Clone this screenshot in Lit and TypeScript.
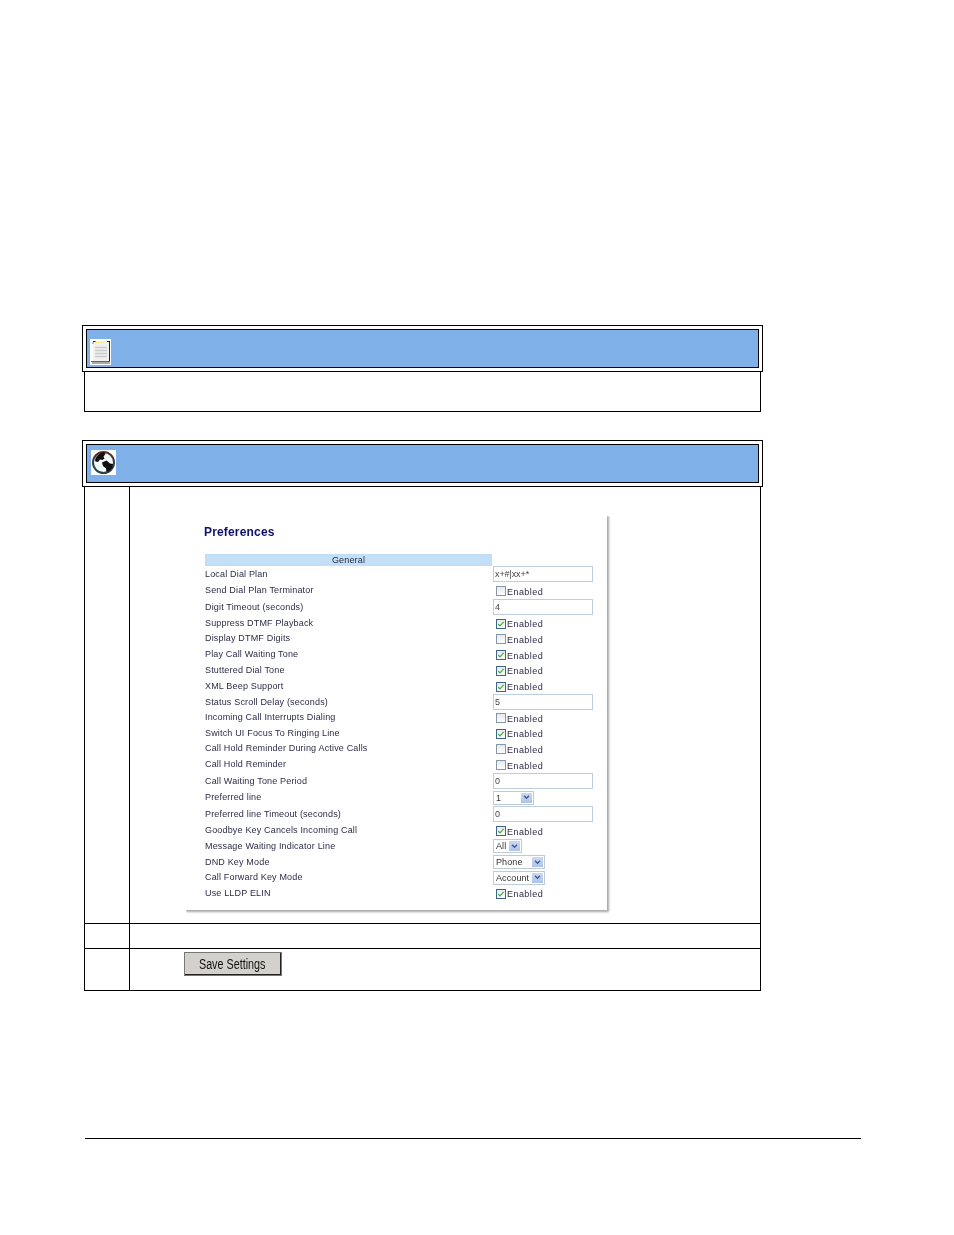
import { LitElement, html, css, svg } from "lit";
import { customElement } from "lit/decorators.js";

type Ctl =
  | { k: "text"; v: string; c?: boolean }
  | { k: "check"; on: boolean }
  | { k: "select"; v: string; w: number };

const rows: [string, number, Ctl][] = [
  ["Local Dial Plan", 16, { k: "text", v: "x+#|xx+*" }],
  ["Send Dial Plan Terminator", 16.5, { k: "check", on: false }],
  ["Digit Timeout (seconds)", 16, { k: "text", v: "4" }],
  ["Suppress DTMF Playback", 16, { k: "check", on: true }],
  ["Display DTMF Digits", 15.5, { k: "check", on: false }],
  ["Play Call Waiting Tone", 16, { k: "check", on: true }],
  ["Stuttered Dial Tone", 15.5, { k: "check", on: true }],
  ["XML Beep Support", 16.5, { k: "check", on: true }],
  ["Status Scroll Delay (seconds)", 15.5, { k: "text", v: "5" }],
  ["Incoming Call Interrupts Dialing", 15.5, { k: "check", on: false }],
  ["Switch UI Focus To Ringing Line", 15, { k: "check", on: true }],
  ["Call Hold Reminder During Active Calls", 16, { k: "check", on: false }],
  ["Call Hold Reminder", 16.5, { k: "check", on: false }],
  ["Call Waiting Tone Period", 16.5, { k: "text", v: "0" }],
  ["Preferred line", 16.5, { k: "select", v: "1", w: 41 }],
  ["Preferred line Timeout (seconds)", 16.5, { k: "text", v: "0" }],
  ["Goodbye Key Cancels Incoming Call", 16, { k: "check", on: true }],
  ["Message Waiting Indicator Line", 15.5, { k: "select", v: "All", w: 29 }],
  ["DND Key Mode", 16, { k: "select", v: "Phone", w: 52 }],
  ["Call Forward Key Mode", 15, { k: "select", v: "Account", w: 52 }],
  ["Use LLDP ELIN", 16, { k: "check", on: true }],
];

const noteIcon = svg`<svg viewBox="0 0 21 26" width="21" height="26">
  <rect width="21" height="26" fill="#fff"/>
  <rect x="3" y="2" width="17" height="21" fill="#f1f1f1"/>
  <path d="M19.500 2.500v20" stroke="#222" stroke-width="1" fill="none"/>
  <path d="M3 2.500h2.500M17 2.500h3" stroke="#222" stroke-width="1"/>
  <path d="M3 3.500v1" stroke="#222" stroke-width="1"/>
  <path d="M5.500 3.500h11" stroke="#ece874" stroke-width="1" stroke-dasharray="1.500 1"/>
  <path d="M5 8.500h12M5 11.500h12M5 14.500h12M5 17.500h12" stroke="#c9cacb" stroke-width="1.300"/>
  <path d="M1 22.500h19" stroke="#666" stroke-width="1"/>
  <rect x="2" y="23" width="18" height="2" fill="#aaacac"/>
</svg>`;

const globeIcon = svg`<svg viewBox="0 0 25 25" width="25" height="25">
  <defs><linearGradient id="ring" x1="0" y1="0" x2="0" y2="1"><stop offset="0" stop-color="#5c2c2c"/><stop offset="1" stop-color="#244848"/></linearGradient></defs>
  <rect width="25" height="25" fill="#fff"/>
  <circle cx="12.500" cy="12.500" r="10.500" fill="#f0fbfb" stroke="url(#ring)" stroke-width="2"/>
  <path d="M4 10c1-4 4-7 9-8l1.500 2-2 2.500 1 2-2 1.500-2.500-.5-2 2.500-2.500-.5z" fill="#16110f"/>
  <path d="M11 12.500l4.500-2 3.500 3 3 .5-.5 3.500-3.500 3.500-2.500 1-.5-3.500-3-2.500z" fill="#100e0e"/>
</svg>`;

const check = svg`<svg viewBox="0 0 10 10" width="8" height="8"><path d="M1.500 5l2.300 2.300 4.500-5" fill="none" stroke="#3cb043" stroke-width="1.500"/></svg>`;

@customElement("app-root")
export class AppRoot extends LitElement {
  static styles = css`
    :host { display: block; width: 954px; height: 1235px; background: #fff; font-family: "Liberation Sans", Arial, sans-serif; }
    .page { display: flex; flex-direction: column; padding: 325px 0 0 82px; box-sizing: border-box; height: 1235px; }
    .banner { box-sizing: border-box; width: 681px; height: 47px; border: 1px solid #000; padding: 3px; }
    .banner-in { box-sizing: border-box; height: 100%; background: #7fb0e8; border: 1px solid #000; display: flex; align-items: flex-start; padding: 9px 0 0 3px; }
    .banner-in.g { padding: 5px 0 0 4px; }
    .banner svg { display: block; }
    .note-body { box-sizing: border-box; margin-left: 2px; width: 677px; height: 40px; border: 1px solid #000; border-top: 0; }
    .gap { height: 28px; }
    .tbl { margin-left: 2px; width: 677px; box-sizing: border-box; border: 1px solid #000; border-top: 0; display: grid; grid-template-columns: 45px 1fr; grid-template-rows: 437px 25px 41px; }
    .c { border-bottom: 1px solid #000; box-sizing: border-box; }
    .c.n { border-right: 1px solid #000; }
    .c.last { border-bottom: 0; }
    .shot-cell { padding: 29px 0 0 56px; }
    .shot { box-sizing: border-box; width: 421px; height: 394px; background: #fff; box-shadow: 1px 1px 2px 1px #a8a8a8; clip-path: inset(0 -4px -4px 0); padding: 9px 0 0 18px; color: #2c2c48; font-size: 9px; letter-spacing: 0.17px; }
    .blur { filter: blur(0.25px); }
    h2 { margin: 0 0 14px; font-size: 12px; line-height: 15px; font-weight: bold; color: #10106a; letter-spacing: 0.17px; }
    .sec { width: 287px; height: 12px; margin-left: 1px; background: #c3dff8; text-align: center; line-height: 12px; color: #2c2c44; box-sizing: border-box; }
    .row { display: grid; grid-template-columns: 288px 1fr; align-items: center; margin-left: 1px; white-space: nowrap; }
    .ctl { display: flex; align-items: center; }
    .txt { box-sizing: border-box; width: 100px; height: 16px; border: 1px solid #bccfe0; padding-left: 1px; line-height: 14px; color: #444; letter-spacing: -0.1px; }
    .chk { display: flex; align-items: center; margin-left: 3px; margin-top: 2px; gap: 1px; letter-spacing: 0.45px; }
    .chk span { line-height: 11px; position: relative; top: 1px; }
    .box { box-sizing: border-box; width: 10px; height: 10px; border: 1px solid #3f6488; background: linear-gradient(#e8e8e8, #fff); display: flex; align-items: center; justify-content: center; }
    .box.off { border-color: #8496a8; }
    .sel { box-sizing: border-box; height: 14px; margin-top: 1px; border: 1px solid #bccada; display: flex; justify-content: space-between; align-items: stretch; padding: 1px; color: #333; letter-spacing: 0.1px; }
    .sel span { padding-left: 1px; line-height: 10px; }
    .arrow { width: 11px; background: linear-gradient(#ccd9f3, #aec3e8); display: flex; align-items: center; justify-content: center; }
    .save-cell { padding: 3px 0 0 54px; }
    .save { box-sizing: border-box; display: flex; align-items: center; justify-content: center; width: 98px; height: 24px; background: #d4d0cb; border-style: solid; border-color: #f0f0f0 #222 #222 #f0f0f0; border-width: 1px 2px 2px 1px; outline: 1px solid #777; outline-offset: -1px; font-family: "Liberation Sans", Arial, sans-serif; font-size: 14px; color: #111; padding: 0; }
    .save span { display: block; transform: scaleX(0.77); white-space: nowrap; }
    .rule { margin-top: 147px; margin-left: 3px; width: 776px; height: 1px; background: #000; }
  `;

  private ctl(c: Ctl) {
    if (c.k === "text") return html`<div class="txt">${c.v}</div>`;
    if (c.k === "check")
      return html`<div class="chk"><div class="box ${c.on ? "" : "off"}">${c.on ? check : ""}</div><span>Enabled</span></div>`;
    return html`<div class="sel" style="width:${c.w}px"><span>${c.v}</span><div class="arrow"><svg viewBox="0 0 8 6" width="7" height="5"><path d="M1 1l3 3 3-3" fill="none" stroke="#3c5a8c" stroke-width="1.600"/></svg></div></div>`;
  }

  render() {
    return html`<div class="page">
      <div class="banner"><div class="banner-in">${noteIcon}</div></div>
      <div class="note-body"></div>
      <div class="gap"></div>
      <div class="banner"><div class="banner-in g">${globeIcon}</div></div>
      <div class="tbl">
        <div class="c n"></div>
        <div class="c shot-cell">
          <div class="shot">
            <div class="blur">
            <h2>Preferences</h2>
            <div class="sec">General</div>
            ${rows.map(([label, h, c]) => html`<div class="row" style="height:${h}px"><div>${label}</div><div class="ctl">${this.ctl(c)}</div></div>`)}
            </div>
          </div>
        </div>
        <div class="c n"></div>
        <div class="c"></div>
        <div class="c n last"></div>
        <div class="c last save-cell"><button class="save"><span>Save Settings</span></button></div>
      </div>
      <div class="rule"></div>
    </div>`;
  }
}
